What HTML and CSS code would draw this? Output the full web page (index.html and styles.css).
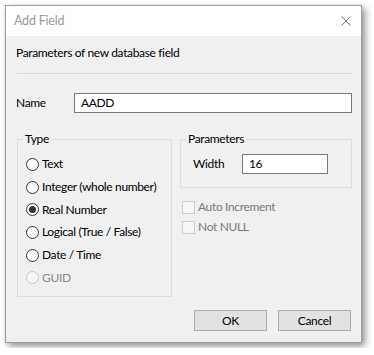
FILE: index.html
```html
<!DOCTYPE html>
<html>
<head>
<meta charset="utf-8">
<link rel="stylesheet" href="styles.css">
</head>
<body>
<div class="window">
  <div class="titlebar">
    <span class="title">Add Field</span>
    <svg class="close" width="10" height="10" viewBox="0 0 10 10"><path d="M0.5 0.5L9.5 9.5M9.5 0.5L0.5 9.5" stroke="#7a7a7a" stroke-width="1" fill="none"/></svg>
  </div>
  <div class="content">
    <div class="heading">Parameters of new database field</div>
    <div class="sep"></div>
    <div class="name-row">
      <span class="name-label">Name</span>
      <div class="input name-input">AADD</div>
    </div>
    <div class="groups">
      <fieldset class="group type-group">
        <legend>Type</legend>
        <div class="radio"><span class="dot"></span>Text</div>
        <div class="radio"><span class="dot"></span>Integer (whole number)</div>
        <div class="radio"><span class="dot checked"></span>Real Number</div>
        <div class="radio"><span class="dot"></span>Logical (True / False)</div>
        <div class="radio"><span class="dot"></span>Date / Time</div>
        <div class="radio disabled"><span class="dot"></span>GUID</div>
      </fieldset>
      <div class="right-col">
        <fieldset class="group params-group">
          <legend>Parameters</legend>
          <div class="width-row">
            <span class="width-label">Width</span>
            <div class="input width-input">16</div>
          </div>
        </fieldset>
        <div class="check first"><span class="box"></span>Auto Increment</div>
        <div class="check"><span class="box"></span>Not NULL</div>
      </div>
    </div>
    <div class="buttons">
      <div class="btn">OK</div>
      <div class="btn">Cancel</div>
    </div>
  </div>
</div>
</body>
</html>
```
FILE: styles.css
```css
html, body {
  margin: 0;
  padding: 0;
  background: #ffffff;
}
body {
  font-family: "Lato", "Noto Sans", sans-serif;
  font-size: 12px;
  letter-spacing: -0.35px;
  color: #000;
}
.window {
  margin: 5px;
  width: 357px;
  height: 338px;
  box-sizing: border-box;
  border: 1px solid #9c9c9c;
  box-shadow: 3px 3px 7px rgba(0,0,0,0.45);
  background: #f0f0f0;
  display: flex;
  flex-direction: column;
}
.titlebar {
  height: 30px;
  background: #fff;
  display: flex;
  align-items: center;
  justify-content: space-between;
  padding: 0 9px 0 8px;
  flex: none;
}
.title {
  color: #999;
  line-height: 16px;
  font-size: 12.5px;
  letter-spacing: -0.2px;
}
.close {
  display: block;
  margin-right: 1px;
}
.content {
  flex: 1;
  padding: 9px 9px 11px 10px;
  display: flex;
  flex-direction: column;
}
.heading {
  line-height: 16px;
}
.sep {
  height: 1px;
  background: #d7d7d7;
  margin: 12px 0 0 1px;
}
.name-row {
  margin-top: 19px;
  display: flex;
  align-items: center;
}
.name-label {
  width: 58px;
  line-height: 16px;
}
.input {
  box-sizing: border-box;
  background: #fff;
  border: 1px solid #7a7a7a;
  line-height: 16px;
  padding: 1px 0 0 6px;
}
.name-input {
  flex: 1;
  height: 20px;
}
.groups {
  margin-top: 18px;
  margin-left: 1px;
  display: flex;
  gap: 8px;
  align-items: flex-start;
}
.group {
  margin: 0;
  padding: 0;
  border: 1px solid #dcdcdc;
  box-sizing: border-box;
  min-width: 0;
}
.group legend {
  padding: 0 2px;
  margin-left: 5px;
  line-height: 16px;
}
.type-group {
  width: 156px;
  height: 166px;
  padding-top: 6px;
}
.radio {
  height: 22.7px;
  display: flex;
  align-items: center;
  line-height: 16px;
  white-space: nowrap;
  padding-left: 8px;
}
.dot {
  width: 13px;
  height: 13px;
  box-sizing: border-box;
  border: 1px solid #333;
  border-radius: 50%;
  background: #fff;
  margin-right: 3px;
  display: flex;
  align-items: center;
  justify-content: center;
  flex: none;
}
.dot.checked::after {
  content: "";
  width: 7px;
  height: 7px;
  border-radius: 50%;
  background: #333;
}
.radio.disabled {
  color: #8a8a8a;
}
.radio.disabled .dot {
  border-color: #c4c4c4;
  background: #f6f6f6;
}
.right-col {
  width: 172px;
  display: flex;
  flex-direction: column;
}
.params-group {
  width: 172px;
  height: 57px;
}
.width-row {
  display: flex;
  align-items: center;
  margin-top: 7px;
  padding-left: 12px;
}
.width-label {
  width: 49px;
  line-height: 16px;
}
.width-input {
  width: 86px;
  height: 20px;
}
.check {
  display: flex;
  align-items: center;
  height: 20px;
  color: #7a7a7a;
  padding-left: 2px;
  line-height: 16px;
}
.check.first {
  margin-top: 9px;
}
.box {
  width: 13px;
  height: 13px;
  box-sizing: border-box;
  border: 1px solid #cccccc;
  background: #f6f6f6;
  margin-right: 3px;
  flex: none;
}
.buttons {
  margin-top: auto;
  display: flex;
  justify-content: flex-end;
  gap: 11px;
  padding-right: 1px;
}
.btn {
  width: 73px;
  height: 21px;
  box-sizing: border-box;
  border: 1px solid #adadad;
  background: #e1e1e1;
  text-align: center;
  line-height: 19px;
}
```
